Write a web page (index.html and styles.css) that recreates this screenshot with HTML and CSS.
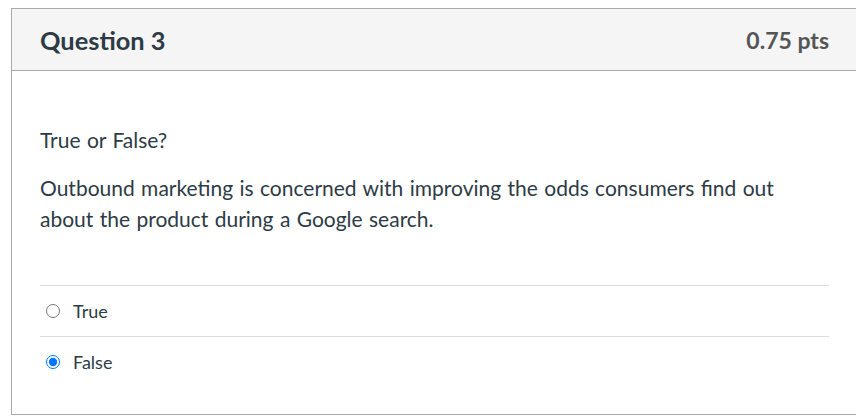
FILE: index.html
```html
<!DOCTYPE html>
<html lang="en">
<head>
<meta charset="utf-8">
<title>Question 3</title>
<link rel="stylesheet" href="styles.css">
</head>
<body>
<div class="question">
  <div class="header">
    <h2 class="title">Question 3</h2>
    <span class="points">0.75 pts</span>
  </div>
  <div class="body">
    <p>True or False?</p>
    <p>Outbound marketing is concerned with improving the odds consumers find out about the product during a Google search.</p>
    <div class="answers">
      <label class="answer"><input type="radio" name="q3"><span>True</span></label>
      <label class="answer"><input type="radio" name="q3" checked><span>False</span></label>
    </div>
  </div>
</div>
</body>
</html>
```
FILE: styles.css
```css
html, body {
  margin: 0;
  padding: 0;
  background: #fff;
}
body {
  font-family: Lato, "Open Sans", sans-serif;
  color: #2d3b45;
}
.question {
  box-sizing: border-box;
  width: 847px;
  margin: 8px 0 0 11px;
  border: 1px solid #aaaaaa;
}
.header {
  display: flex;
  justify-content: space-between;
  align-items: center;
  height: 61px;
  padding: 0 28px;
  background: #f5f5f5;
  border-bottom: 1px solid #aaaaaa;
}
.title {
  margin: 0;
  font-size: 25.4px;
  font-weight: 700;
  color: #2d3b45;
}
.points {
  font-size: 23px;
  font-weight: 700;
  color: #555555;
}
.body {
  padding: 53px 28px 27px;
}
.body p {
  margin: 0 0 17px;
  font-size: 21px;
  line-height: 31px;
  word-spacing: 1px;
  width: 760px;
}
.answers {
  margin-top: 51px;
}
.answer {
  display: flex;
  align-items: center;
  gap: 13px;
  height: 50px;
  border-top: 1px solid #dddddd;
  font-size: 18px;
  padding-left: 6px;
}
.answer input {
  margin: 0;
  width: 14px;
  height: 14px;
}
```
